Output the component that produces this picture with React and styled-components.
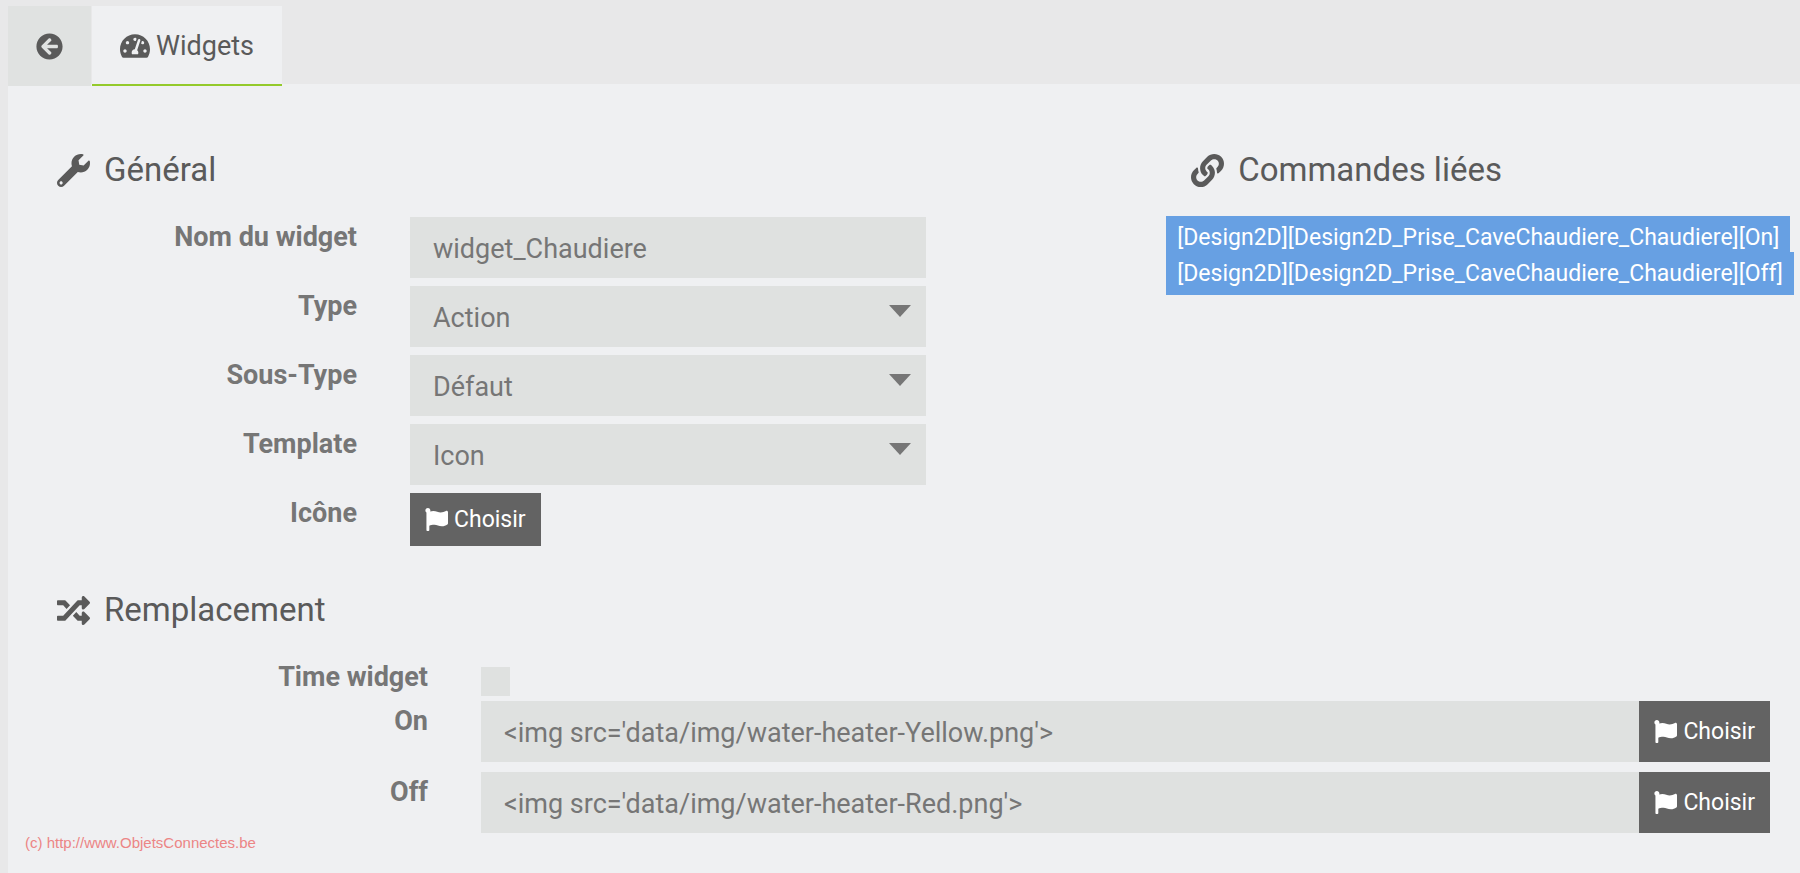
import React from 'react';
import styled, {createGlobalStyle, css} from "styled-components";
import {FaArrowCircleLeft, FaTachometerAlt, FaWrench, FaLink, FaRandom, FaFlag} from "react-icons/fa";


const GlobalStyle = createGlobalStyle`
    *{
        box-sizing: border-box;
    }
    body{
        margin: 0;
        background-color: #e8e8e9;
        color: #767676;
        font-family: Roboto, sans-serif;
        font-size: 27px;
    }
    button, input, select{
        font-family: inherit;
    }
`;

const Wrapper = styled.div`
    min-height: 100vh;
    padding: 6px 0 0 8px;
    display: flex;
    flex-flow: column nowrap;
`;

const TabBar = styled.nav`
    position: relative;
    z-index: 1;
    display: flex;
    gap: 1px;
    margin-bottom: -2px;
`;

const Tab = styled.a`
    height: 80px;
    padding: 0 28px;
    display: flex;
    align-items: center;
    gap: 6px;
    background-color: #e0e2e1;
    color: #5a5a5a;
    text-decoration: none;

    >svg{
        width: 27px;
        height: 27px;
    }

    ${props => props.$active && css`
        background-color: #eff0f2;
        border-bottom: 2px solid #94ca2c;
        padding-top: 2px;

        >svg{
            width: 30px;
            height: 30px;
        }
    `}
`;

const Panel = styled.main`
    flex: 1;
    padding-top: 66px;
    background-color: #eff0f2;
`;

const Columns = styled.div`
    padding-left: 49px;
    display: grid;
    grid-template-columns: 7fr 4fr;
`;

const General = styled.section`
    padding-right: 240px;
`;

const Linked = styled.section`
    min-width: 0;
`;

const Replacement = styled.section`
    padding: 44px 30px 0 49px;
`;

const Title = styled.h2`
    margin: 0 0 27px;
    padding-left: ${props => props.$indent ? "25px" : "0"};
    display: flex;
    align-items: center;
    gap: 14px;
    color: #5a5a5a;
    font-size: 33px;
    font-weight: 400;
    line-height: 40px;

    >svg{
        width: 33px;
        height: 33px;
    }
`;

const Rows = styled.div`
    display: grid;
    row-gap: ${props => props.$wide ? "10px" : "8px"};
`;

const Row = styled.div`
    display: grid;
    grid-template-columns: ${props => props.$wide ? "371px" : "300px"} 1fr;
    column-gap: 53px;
    align-items: start;
`;

const CheckRow = styled(Row)`
    margin-bottom: 4px;
`;

const Label = styled.label`
    text-align: right;
    font-weight: 700;
    line-height: 40px;
`;

const fieldStyle = css`
    width: 100%;
    min-width: 0;
    height: 61px;
    padding: 2px 23px 0;
    border: 0;
    border-radius: 0;
    background-color: #dfe1e0;
    color: #767676;
    font-size: 27px;
    outline: none;
`;

const TextInput = styled.input`
    ${fieldStyle}
`;

const SelectBox = styled.div`
    position: relative;

    &:after{
        content: "";
        position: absolute;
        top: 19px;
        right: 15px;
        border: 11px solid transparent;
        border-top: 12px solid #767676;
        border-bottom: 0;
        pointer-events: none;
    }
`;

const Select = styled.select`
    ${fieldStyle}
    display: block;
    appearance: none;
`;

const Checkbox = styled.input`
    appearance: none;
    width: 29px;
    height: 29px;
    margin: 10px 0 0;
    background-color: #dfe1e0;
`;

const InputGroup = styled.div`
    display: flex;
`;

const ChooseButton = styled.button`
    height: ${props => props.$tall ? "61px" : "53px"};
    padding: 0 15px;
    flex: none;
    justify-self: start;
    display: flex;
    align-items: center;
    gap: 6px;
    border: 0;
    background-color: #636363;
    color: #fff;
    font-size: 23px;

    >svg{
        width: 23px;
        height: 23px;
    }
`;

const CommandList = styled.ul`
    margin: -1px 0 0;
    padding: 0;
    list-style: none;

    >li{
        height: 36px;
    }
`;

const Command = styled.span`
    display: inline-block;
    padding: 1px 11px 0;
    background-color: #67a0e3;
    color: #fff;
    font-size: 23px;
    line-height: 42px;
    white-space: nowrap;
`;

const Copyright = styled.footer`
    padding-left: 17px;
    color: #ec8585;
    font-family: "Liberation Sans", sans-serif;
    font-size: 15px;
    line-height: 20px;
`;


const selects = [
    {id: "type", label: "Type", value: "Action"},
    {id: "subtype", label: "Sous-Type", value: "Défaut"},
    {id: "template", label: "Template", value: "Icon"},
];

const replacements = [
    {id: "on", label: "On", value: "<img src='data/img/water-heater-Yellow.png'>"},
    {id: "off", label: "Off", value: "<img src='data/img/water-heater-Red.png'>"},
];

const commands = [
    "[Design2D][Design2D_Prise_CaveChaudiere_Chaudiere][On]",
    "[Design2D][Design2D_Prise_CaveChaudiere_Chaudiere][Off]",
];


export default function App(){
    return <Wrapper>
        <GlobalStyle />
        <TabBar>
            <Tab href="#back" aria-label="Retour"><FaArrowCircleLeft /></Tab>
            <Tab href="#widgets" $active><FaTachometerAlt />Widgets</Tab>
        </TabBar>
        <Panel>
            <Columns>
                <General>
                    <Title><FaWrench />Général</Title>
                    <Rows>
                        <Row>
                            <Label htmlFor="name">Nom du widget</Label>
                            <TextInput id="name" defaultValue="widget_Chaudiere" />
                        </Row>
                        {selects.map(item => <Row key={item.id}>
                            <Label htmlFor={item.id}>{item.label}</Label>
                            <SelectBox>
                                <Select id={item.id} defaultValue={item.value}>
                                    <option>{item.value}</option>
                                </Select>
                            </SelectBox>
                        </Row>)}
                        <Row>
                            <Label htmlFor="icon">Icône</Label>
                            <ChooseButton id="icon" type="button"><FaFlag />Choisir</ChooseButton>
                        </Row>
                    </Rows>
                </General>
                <Linked>
                    <Title $indent><FaLink />Commandes liées</Title>
                    <CommandList>
                        {commands.map(name => <li key={name}><Command>{name}</Command></li>)}
                    </CommandList>
                </Linked>
            </Columns>
            <Replacement>
                <Title><FaRandom />Remplacement</Title>
                <CheckRow $wide>
                    <Label htmlFor="time">Time widget</Label>
                    <Checkbox id="time" type="checkbox" />
                </CheckRow>
                <Rows $wide>
                    {replacements.map(item => <Row key={item.id} $wide>
                        <Label htmlFor={item.id}>{item.label}</Label>
                        <InputGroup>
                            <TextInput id={item.id} defaultValue={item.value} />
                            <ChooseButton type="button" $tall><FaFlag />Choisir</ChooseButton>
                        </InputGroup>
                    </Row>)}
                </Rows>
            </Replacement>
            <Copyright>(c) http://www.ObjetsConnectes.be</Copyright>
        </Panel>
    </Wrapper>
}
